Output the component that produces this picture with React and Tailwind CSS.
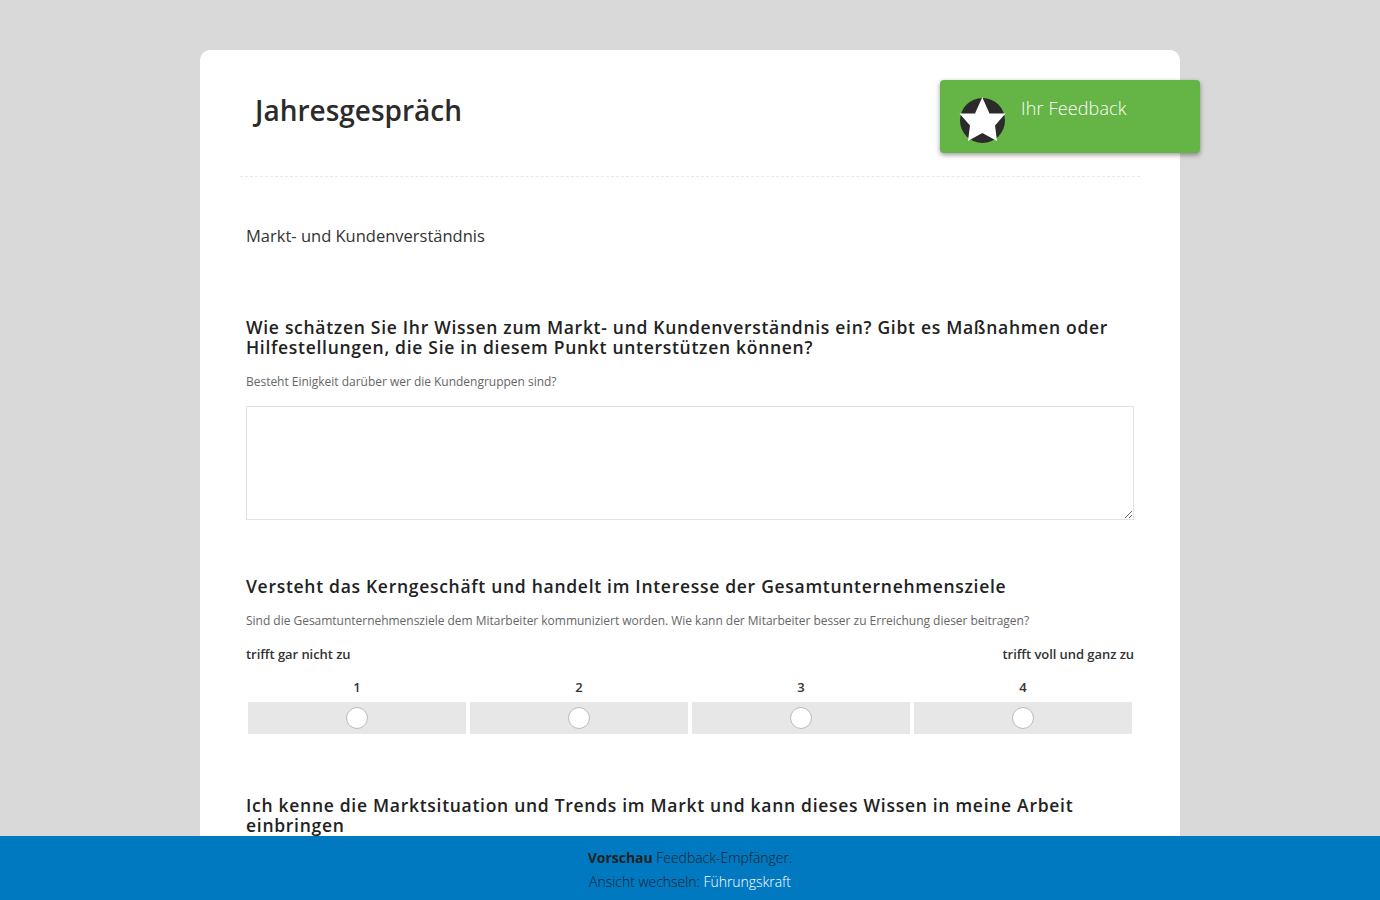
import { useState } from "react";

const options = [1, 2, 3, 4];

function Question({ title, hint, className = "" }) {
  return (
    <div className={className}>
      <h3 className="text-[17.5px] leading-[20px] font-semibold tracking-[0.71px] text-[#222]">{title}</h3>
      {hint && <p className="mt-[16px] text-[12px] leading-[18px] tracking-[-0.02px] text-[#666]">{hint}</p>}
    </div>
  );
}

function RatingScale() {
  const [value, setValue] = useState(null);

  return (
    <div className="mt-[15px]">
      <div className="flex justify-between text-[13px] leading-[18px] font-semibold tracking-[-0.06px] text-[#333]">
        <span>trifft gar nicht zu</span>
        <span>trifft voll und ganz zu</span>
      </div>
      <div className="mt-[15px] grid grid-cols-4 gap-x-[4px] px-[2px]">
        {options.map((n) => (
          <label key={n} className="flex flex-col items-center cursor-pointer">
            <span className="text-[13px] leading-[18px] font-semibold text-[#333]">{n}</span>
            <span className="mt-[6px] flex h-[32px] w-full items-center justify-center bg-[#e7e7e7]">
              <input
                type="radio"
                name="kerngeschaeft"
                checked={value === n}
                onChange={() => setValue(n)}
                className="h-[22px] w-[22px] appearance-none rounded-full border-[1.5px] border-[#bbb] bg-white checked:border-[6px] checked:border-[#0079c1]"
              />
            </span>
          </label>
        ))}
      </div>
    </div>
  );
}

export default function App() {
  return (
    <div className="h-screen overflow-hidden bg-[#d9d9d9] pt-[50px] font-['Open_Sans',sans-serif]">
      <div className="mx-auto w-[980px] rounded-t-[10px] bg-white px-[40px] pb-[40px]">
        {/* HEADER */}
        <div className="flex h-[127px] items-start justify-between border-b border-dashed border-[#e8e8e8]">
          <h1 className="mt-[41px] ml-[15px] text-[28px] leading-[38px] font-semibold text-[#2b2b2b]">
            Jahresgespräch
          </h1>
          <div className="mt-[30px] -mr-[60px] flex h-[73px] w-[260px] rounded-[4px] bg-[#65b446] pl-[20px] shadow-[0_2px_5px_rgba(0,0,0,0.4)]">
            <svg viewBox="0 0 45 45" className="mt-[18px] h-[45px] w-[45px] shrink-0 overflow-visible">
              <circle cx="22.5" cy="22.5" r="22.5" fill="#2b2b2b" />
              <path
                d="M22.3 -0.7 L29.5 15.5 L45.5 15.5 L35 27.5 L37 43 L22.3 35 L8 43 L10 27.5 L-0.5 15.5 L15 15.5 Z"
                fill="#fff"
              />
            </svg>
            <span className="mt-[16px] ml-[16px] text-[18px] leading-[24px] tracking-[0.15px] font-light text-white">Ihr Feedback</span>
          </div>
        </div>

        {/* FORM */}
        <div className="px-[6px]">
          <h2 className="mt-[47px] text-[16.5px] leading-[24px] text-[#333]">Markt- und Kundenverständnis</h2>

          <Question
            className="mt-[69px]"
            title="Wie schätzen Sie Ihr Wissen zum Markt- und Kundenverständnis ein? Gibt es Maßnahmen oder Hilfestellungen, die Sie in diesem Punkt unterstützen können?"
            hint="Besteht Einigkeit darüber wer die Kundengruppen sind?"
          />
          <textarea className="mt-[15px] block h-[114px] w-full border border-[#e3e3e3] bg-white p-2 text-[14px] outline-none" />

          <Question
            className="mt-[56px]"
            title="Versteht das Kerngeschäft und handelt im Interesse der Gesamtunternehmensziele"
            hint="Sind die Gesamtunternehmensziele dem Mitarbeiter kommuniziert worden. Wie kann der Mitarbeiter besser zu Erreichung dieser beitragen?"
          />
          <RatingScale />

          <Question
            className="mt-[61px]"
            title="Ich kenne die Marktsituation und Trends im Markt und kann dieses Wissen in meine Arbeit einbringen"
          />
        </div>
      </div>

      {/* VORSCHAU LEISTE */}
      <div className="fixed inset-x-0 bottom-0 h-[64px] bg-[#0079c1] pt-[10px] text-center text-[14px] leading-[24px] tracking-[-0.03px] font-light text-[#16202b]">
        <p>
          <span className="font-bold text-[#222]">Vorschau</span> Feedback-Empfänger.
        </p>
        <p>
          Ansicht wechseln: <a href="#" className="text-white">Führungskraft</a>
        </p>
      </div>
    </div>
  );
}
